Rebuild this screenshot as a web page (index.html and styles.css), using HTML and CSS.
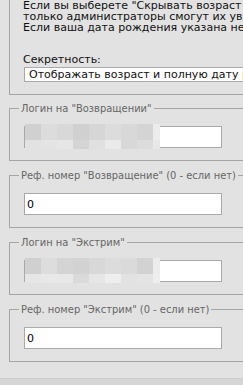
FILE: index.html
```html
<!DOCTYPE html>
<html lang="ru">
<head>
  <meta charset="UTF-8">
  <meta name="viewport" content="width=device-width, initial-scale=1.0">
  <title>Настройки профиля</title>
  <link rel="stylesheet" href="styles.css">
</head>
<body>

  <div class="page">

    <!-- Privacy block (top of it is scrolled off) -->
    <fieldset class="group group-privacy">
      <p class="note">Если вы выберете "Скрывать возраст и дату рождения", то<br>
        только администраторы смогут их увидеть на странице.<br>
        Если ваша дата рождения указана неверно, обратитесь к нам.</p>
      <label class="caption" for="privacy">Секретность:</label>
      <select id="privacy" class="select">
        <option>Отображать возраст и полную дату рождения</option>
        <option>Отображать только возраст</option>
        <option>Скрывать возраст и дату рождения</option>
      </select>
    </fieldset>

    <fieldset class="group">
      <legend>Логин на "Возвращении"</legend>
      <div class="masked">
        <input type="text" class="field" value="">
        <div class="mosaic mosaic-a">
          <span></span><span></span><span></span><span></span><span></span><span></span><span></span><span></span><span></span>
          <span></span><span></span><span></span><span></span><span></span><span></span><span></span><span></span><span></span>
        </div>
      </div>
    </fieldset>

    <fieldset class="group">
      <legend>Реф. номер "Возвращение" (0 - если нет)</legend>
      <input type="text" class="field" value="0">
    </fieldset>

    <fieldset class="group">
      <legend>Логин на "Экстрим"</legend>
      <div class="masked">
        <input type="text" class="field" value="">
        <div class="mosaic mosaic-b">
          <span></span><span></span><span></span><span></span><span></span><span></span><span></span><span></span><span></span>
          <span></span><span></span><span></span><span></span><span></span><span></span><span></span><span></span><span></span>
        </div>
      </div>
    </fieldset>

    <fieldset class="group">
      <legend>Реф. номер "Экстрим" (0 - если нет)</legend>
      <input type="text" class="field" value="0">
    </fieldset>

  </div>

  <div class="footer"></div>

</body>
</html>
```

FILE: styles.css
```css
html {
  overflow: hidden;
}
body {
  margin: 0;
  background-color: #e2e2e2;
  font-family: "DejaVu Sans", Verdana, sans-serif;
  font-size: 11px;
  line-height: 11px;
  color: #111;
}
.page {
  padding-left: 9px;
  width: 300px;
}
.group {
  margin: 9px 0 0 0;
  padding: 12px 0 12px 9px;
  border: 1px solid #a6a6a6;
  min-width: 0;
}
.group legend {
  padding: 0 2px;
  color: #666;
  font-family: "DejaVu Sans Condensed", "DejaVu Sans", sans-serif;
  font-stretch: condensed;
  line-height: 11px;
  white-space: nowrap;
}
.group-privacy {
  margin-top: 0;
  border-top: none;
  padding: 0 0 12px 13px;
}
.note {
  margin: 0 0 21px 0;
  white-space: nowrap;
}
.caption {
  display: block;
  margin-bottom: 2px;
}
.select {
  display: block;
  margin-left: 1px;
  width: 260px;
  height: 15px;
  padding: 0 0 0 4px;
  border: 1px solid #a9a9a9;
  background-color: #fff;
  font-family: inherit;
  font-size: 11px;
  color: #111;
  appearance: none;
  border-radius: 0;
}
.field {
  display: block;
  box-sizing: border-box;
  margin: 0 0 0 5px;
  width: 198px;
  height: 22px;
  padding: 0 2px;
  border: 1px solid #a9a9a9;
  background-color: #fff;
  font-family: inherit;
  font-size: 11px;
  color: #000;
  outline: none;
}
.group + .group {
  margin-top: 9px;
}
.group-privacy + .group {
  margin-top: 8px;
}

/* blurred logins */
.masked {
  position: relative;
}
.mosaic {
  position: absolute;
  left: 6px;
  top: -2px;
  display: grid;
  grid-template-columns: repeat(8, 16px) 7px;
  grid-template-rows: 16px 9px;
}
.mosaic-a span:nth-child(1) { background: #d0d0d0; }
.mosaic-a span:nth-child(2) { background: #dcdcdc; }
.mosaic-a span:nth-child(3) { background: #d8d8d8; }
.mosaic-a span:nth-child(4) { background: #d0d0d0; }
.mosaic-a span:nth-child(5) { background: #d6d6d6; }
.mosaic-a span:nth-child(6) { background: #dcdcdc; }
.mosaic-a span:nth-child(7) { background: #d8d8d8; }
.mosaic-a span:nth-child(8) { background: #d4d4d4; }
.mosaic-a span:nth-child(9) { background: #ececec; }
.mosaic-a span:nth-child(10) { background: #e2e2e2; }
.mosaic-a span:nth-child(11) { background: #e4e4e4; }
.mosaic-a span:nth-child(12) { background: #e6e6e6; }
.mosaic-a span:nth-child(13) { background: #d4d4d4; }
.mosaic-a span:nth-child(14) { background: #e0e0e0; }
.mosaic-a span:nth-child(15) { background: #eaeaea; }
.mosaic-a span:nth-child(16) { background: #d8d8d8; }
.mosaic-a span:nth-child(17) { background: #dcdcdc; }
.mosaic-a span:nth-child(18) { background: #e8e8e8; }

.mosaic-b span:nth-child(1) { background: #d0d0d0; }
.mosaic-b span:nth-child(2) { background: #dddddd; }
.mosaic-b span:nth-child(3) { background: #d4d4d4; }
.mosaic-b span:nth-child(4) { background: #d2d2d2; }
.mosaic-b span:nth-child(5) { background: #d8d8d8; }
.mosaic-b span:nth-child(6) { background: #dcdcdc; }
.mosaic-b span:nth-child(7) { background: #dadada; }
.mosaic-b span:nth-child(8) { background: #d2d2d2; }
.mosaic-b span:nth-child(9) { background: #ececec; }
.mosaic-b span:nth-child(10) { background: #e6e6e6; }
.mosaic-b span:nth-child(11) { background: #e8e8e8; }
.mosaic-b span:nth-child(12) { background: #e8e8e8; }
.mosaic-b span:nth-child(13) { background: #dadada; }
.mosaic-b span:nth-child(14) { background: #e6e6e6; }
.mosaic-b span:nth-child(15) { background: #eeeeee; }
.mosaic-b span:nth-child(16) { background: #e2e2e2; }
.mosaic-b span:nth-child(17) { background: #e4e4e4; }
.mosaic-b span:nth-child(18) { background: #eeeeee; }

.footer {
  margin-top: 16px;
  height: 20px;
  border-top: 1px solid #cdcdcd;
  background-color: #d5d5d5;
}
```
